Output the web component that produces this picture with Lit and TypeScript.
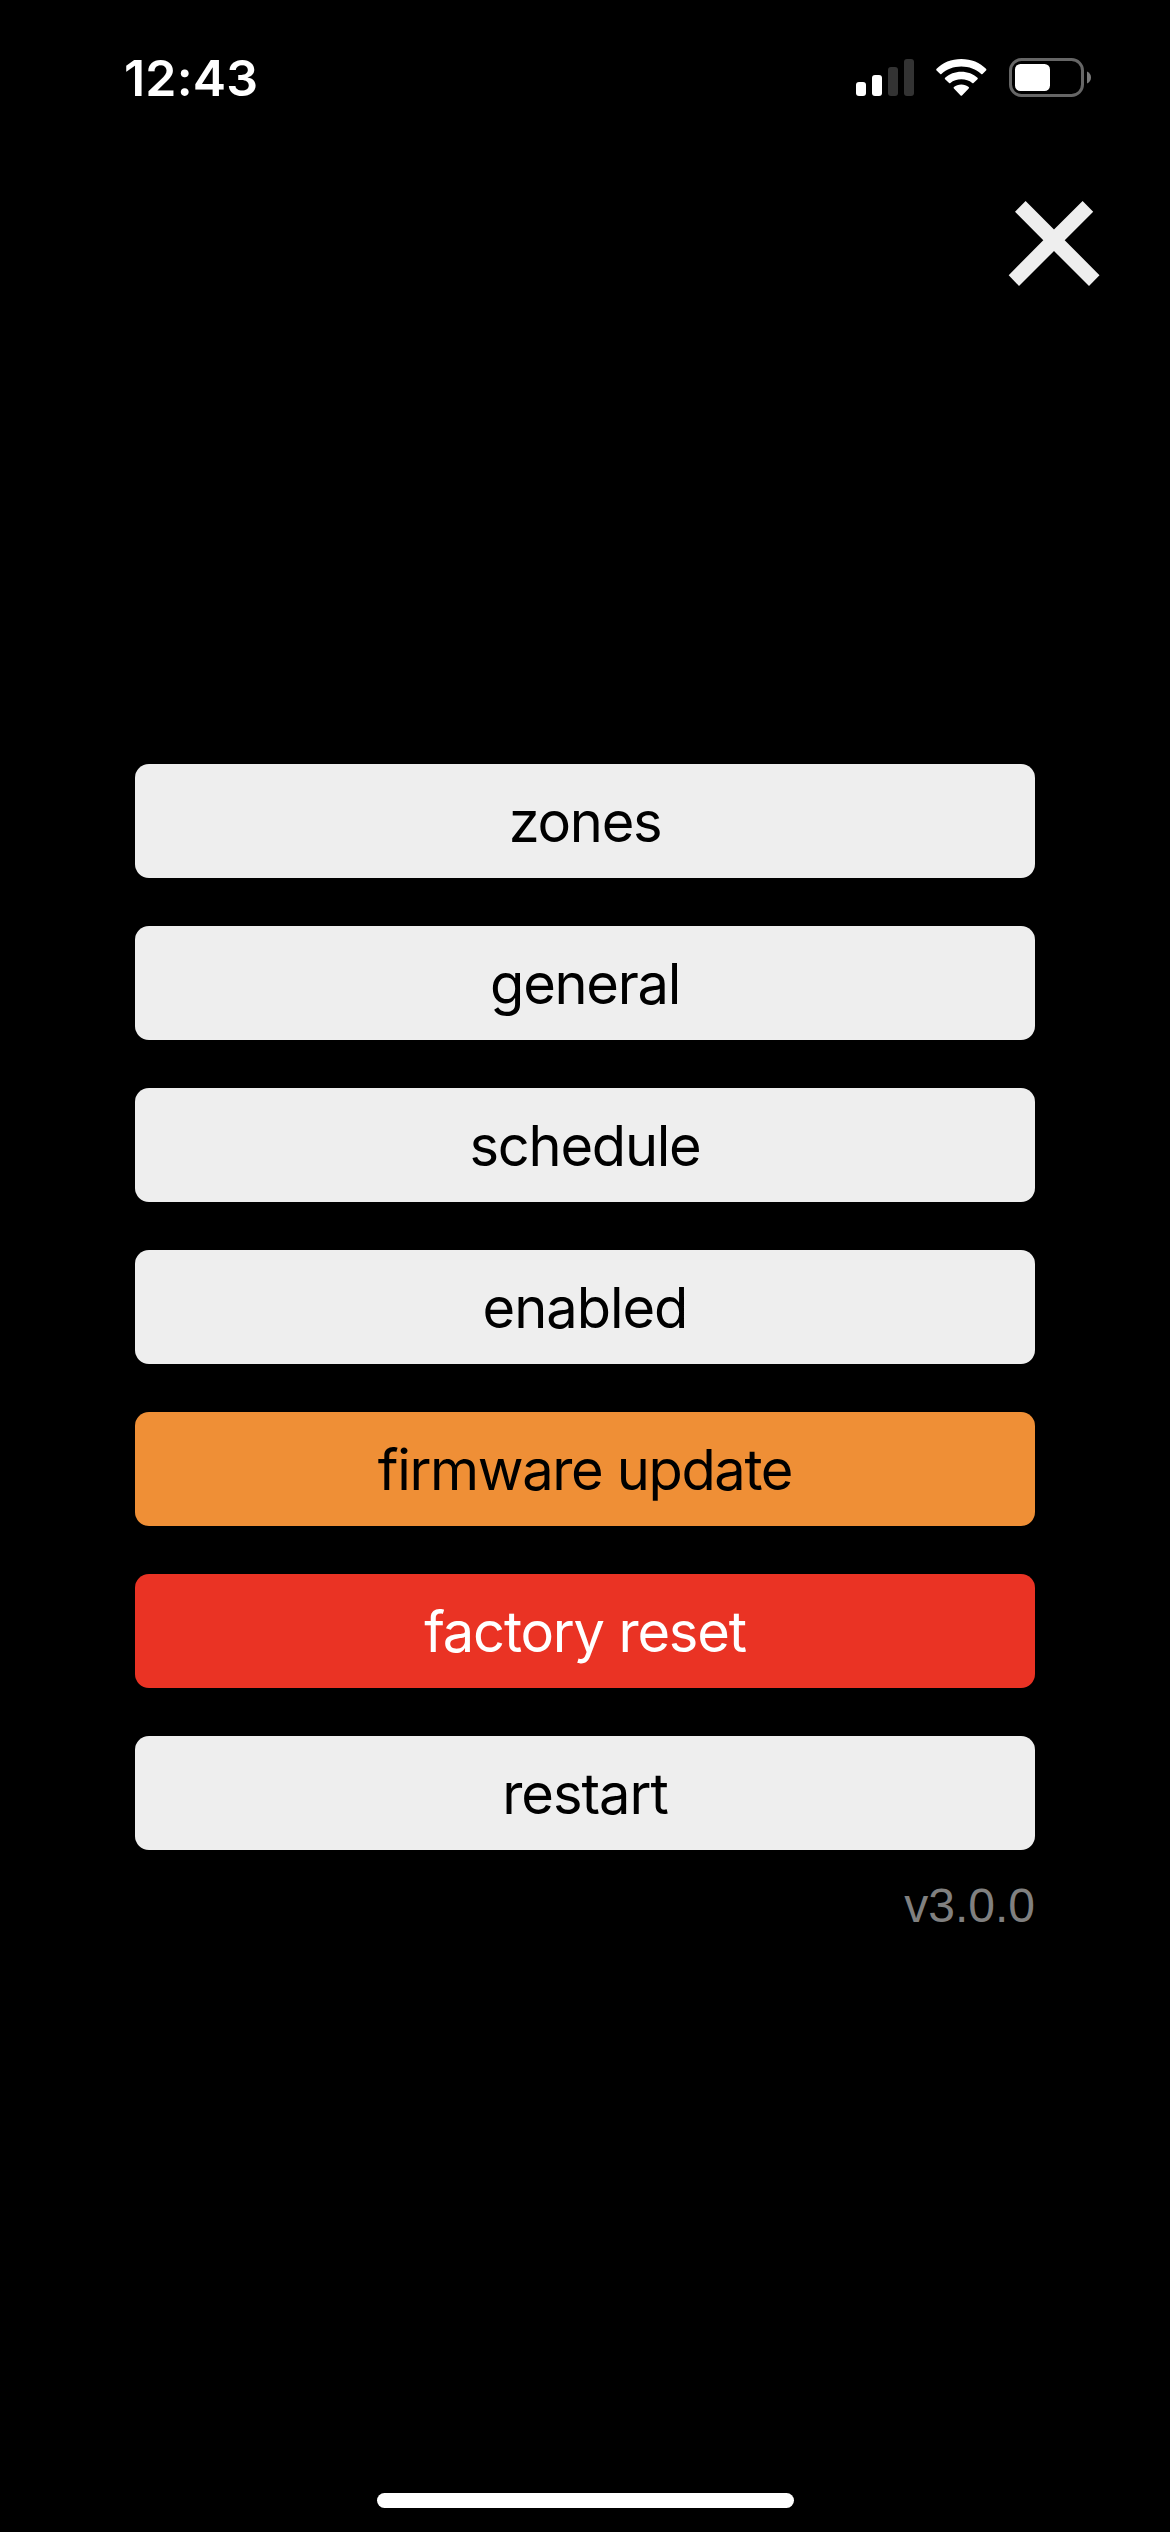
import { LitElement, html, css } from "lit";
import { customElement } from "lit/decorators.js";
import { classMap } from "lit/directives/class-map.js";

interface MenuItem {
  label: string;
  tone: "plain" | "warn" | "danger";
  tracking: number;
}

const MENU: MenuItem[] = [
  { label: "zones", tone: "plain", tracking: -1.27 },
  { label: "general", tone: "plain", tracking: -1.28 },
  { label: "schedule", tone: "plain", tracking: -1.25 },
  { label: "enabled", tone: "plain", tracking: -1.03 },
  { label: "firmware update", tone: "warn", tracking: -1.36 },
  { label: "factory reset", tone: "danger", tracking: -1.2 },
  { label: "restart", tone: "plain", tracking: -1.0 },
];

@customElement("status-bar")
export class StatusBar extends LitElement {
  static styles = css`
    :host {
      display: flex;
      justify-content: space-between;
      align-items: center;
      height: 156px;
      padding: 0 78px 0 124px;
      box-sizing: border-box;
      color: #fff;
    }
    .time {
      font: 600 50px/60px Inter, sans-serif;
      letter-spacing: 0.2px;
    }
    .icons {
      display: flex;
      align-items: center;
      gap: 22px;
    }
    svg {
      display: block;
    }
  `;

  render() {
    return html`
      <div class="time">12:43</div>
      <div class="icons">
        <svg width="58" height="40" viewBox="0 0 58 40">
          <rect x="0" y="24" width="10" height="14" rx="3" fill="#fff" />
          <rect x="16" y="17" width="10" height="21" rx="3" fill="#fff" />
          <rect x="32" y="9" width="10" height="29" rx="3" fill="#333" />
          <rect x="48" y="1" width="10" height="37" rx="3" fill="#333" />
        </svg>
        <svg width="51" height="40" viewBox="0 0 51 40" fill="#fff">
          <path d="M25.3 1C35.2 1 44.200 4.700 50 10.800Q50.800 11.700 50 12.500L46.500 16Q45.800 16.500 45.200 16C40 11.200 33 8.500 25.300 8.500S10.600 11.200 5.400 16Q4.800 16.500 4.200 16L.6 12.500Q-.2 11.700 .6 10.800C6.400 4.700 15.400 1 25.300 1Z" />
          <path d="M25.300 13.800C31.600 13.800 37.300 16.100 41.500 19.800Q42.200 20.500 41.500 21.200L37.500 25Q36.900 25.500 36.200 25C33.300 22.600 29.500 21.300 25.300 21.300S17.300 22.600 14.400 25Q13.700 25.500 13.100 25L9.100 21.200Q8.400 20.500 9.100 19.800C13.300 16.100 19 13.800 25.300 13.800Z" />
          <path d="M25.300 26.600C28.200 26.600 30.700 27.500 32.700 29Q33.400 29.700 32.700 30.400L26 37.400Q25.300 38.100 24.600 37.400L17.900 30.400Q17.200 29.700 17.900 29C19.900 27.500 22.400 26.600 25.300 26.600Z" />
        </svg>
        <svg width="83" height="40" viewBox="0 0 83 40">
          <rect x="1.500" y="1.500" width="72" height="36" rx="11" fill="none" stroke="#666" stroke-width="3" />
          <rect x="6" y="6" width="35" height="27" rx="5.500" fill="#fff" />
          <path d="M78 13.500C80.600 14.600 82 16.800 82 19.500S80.600 24.400 78 25.500Z" fill="#7a7a7a" />
        </svg>
      </div>
    `;
  }
}

@customElement("app-root")
export class AppRoot extends LitElement {
  static styles = css`
    :host {
      display: flex;
      flex-direction: column;
      height: 2532px;
      background: #000;
      overflow: hidden;
    }
    .close-row {
      display: flex;
      justify-content: flex-end;
      height: 608px;
      padding: 44px 70px 0 0;
      box-sizing: border-box;
    }
    .close {
      width: 92px;
      height: 88px;
      padding: 0;
      border: 0;
      background: none;
    }
    .close svg {
      display: block;
    }
    .menu {
      display: flex;
      flex-direction: column;
      gap: 48px;
      padding: 0 135px;
    }
    .item {
      height: 114px;
      padding: 2px 0 0;
      box-sizing: border-box;
      border: 0;
      border-radius: 14px;
      background: #eee;
      color: #000;
      font: 400 56px/112px Inter, sans-serif;
      text-align: center;
      white-space: nowrap;
    }
    .item.warn {
      background: #ef8f36;
    }
    .item.danger {
      background: #ea3324;
      color: #fff;
    }
    .version {
      padding: 28px 135px 0;
      color: #808080;
      font: 48px/56px "Liberation Sans", Arial, sans-serif;
      text-align: right;
    }
    .home {
      width: 417px;
      height: 15px;
      margin: auto auto 24px;
      border-radius: 7.5px;
      background: #fff;
    }
  `;

  render() {
    return html`
      <status-bar></status-bar>
      <div class="close-row">
        <button class="close" aria-label="Close">
          <svg width="92" height="88" viewBox="0 0 92 88" fill="#eee">
            <path d="M17.600 1L46 29.500L74.600 1L85.200 11.700L56.700 40.200L91.500 75.200L81 86L46 51L11 86L.7 75.200L35.300 40.200L7 11.700Z" />
          </svg>
        </button>
      </div>
      <nav class="menu">
        ${MENU.map(
          (m) => html`<button
            class=${classMap({ item: true, warn: m.tone === "warn", danger: m.tone === "danger" })}
            style="letter-spacing:${m.tracking}px"
          >${m.label}</button>`
        )}
      </nav>
      <div class="version">v3.0.0</div>
      <div class="home"></div>
    `;
  }
}
